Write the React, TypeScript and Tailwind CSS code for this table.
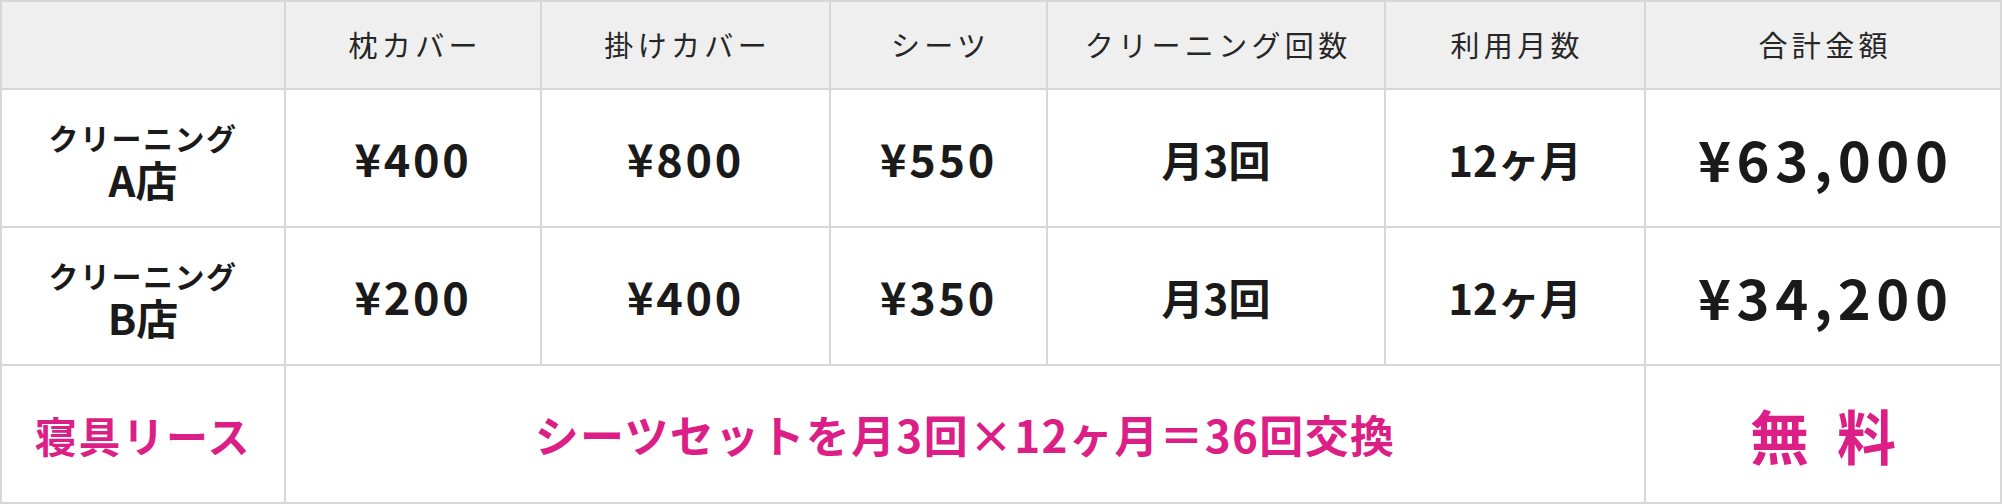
const font = { fontFamily: '"Noto Sans CJK JP", "Noto Sans", sans-serif' };

const headers = ['枕カバー', '掛けカバー', 'シーツ', 'クリーニング回数', '利用月数', '合計金額'];

const shops = [
  { name: 'A店', prices: ['¥400', '¥800', '¥550'], times: '月3回', months: '12ヶ月', total: '¥63,000' },
  { name: 'B店', prices: ['¥200', '¥400', '¥350'], times: '月3回', months: '12ヶ月', total: '¥34,200' },
];

export default function App() {
  return (
    <div className="w-[2002px] h-[504px] bg-white" style={font}>
      <div className="grid grid-cols-[282px_254px_287px_215px_336px_258px_354px] grid-rows-[86px_136px_136px_136px] gap-[2px] p-[2px] bg-[#d7d7d7]">
        {/* header */}
        <div className="bg-[#efefef]" />
        {headers.map((h) => (
          <div key={h} className="bg-[#efefef] flex items-center justify-center text-[29px] text-[#262626] tracking-[0.15em] pl-[0.15em]">
            {h}
          </div>
        ))}

        {shops.map((s) => (
          <div key={s.name} className="contents">
            <div className="bg-white flex flex-col items-center justify-center font-bold text-[#1a1a1a] pt-[4px]">
              <span className="text-[30px] leading-[38px] tracking-[0.05em]">クリーニング</span>
              <span className="text-[42px] leading-[46px]">{s.name}</span>
            </div>
            {s.prices.map((p, i) => (
              <div key={i} className="bg-white flex items-center justify-center font-bold text-[#1a1a1a] text-[45px] tracking-[0.06em]">
                {p}
              </div>
            ))}
            <div className="bg-white flex items-center justify-center font-bold text-[#1a1a1a] text-[42px]">
              {s.times}
            </div>
            <div className="bg-white flex items-center justify-center font-bold text-[#1a1a1a] text-[42px]">
              {s.months}
            </div>
            <div className="bg-white flex items-center justify-center font-bold text-[#1a1a1a] text-[56px] tracking-[0.1em] pl-[0.1em]">
              {s.total}
            </div>
          </div>
        ))}

        {/* lease row */}
        <div className="bg-white flex items-center justify-center font-bold text-[#dc1f86] text-[42px] tracking-[0.04em]">
          寝具リース
        </div>
        <div className="col-span-5 bg-white flex items-center justify-center font-bold text-[#dc1f86] text-[44px] tracking-[0.03em]">
          シーツセットを月3回×12ヶ月＝36回交換
        </div>
        <div className="bg-white flex items-center justify-center gap-[28px] font-bold text-[#dc1f86] text-[59px] leading-none">
          <span>無</span>
          <span>料</span>
        </div>
      </div>
    </div>
  );
}
